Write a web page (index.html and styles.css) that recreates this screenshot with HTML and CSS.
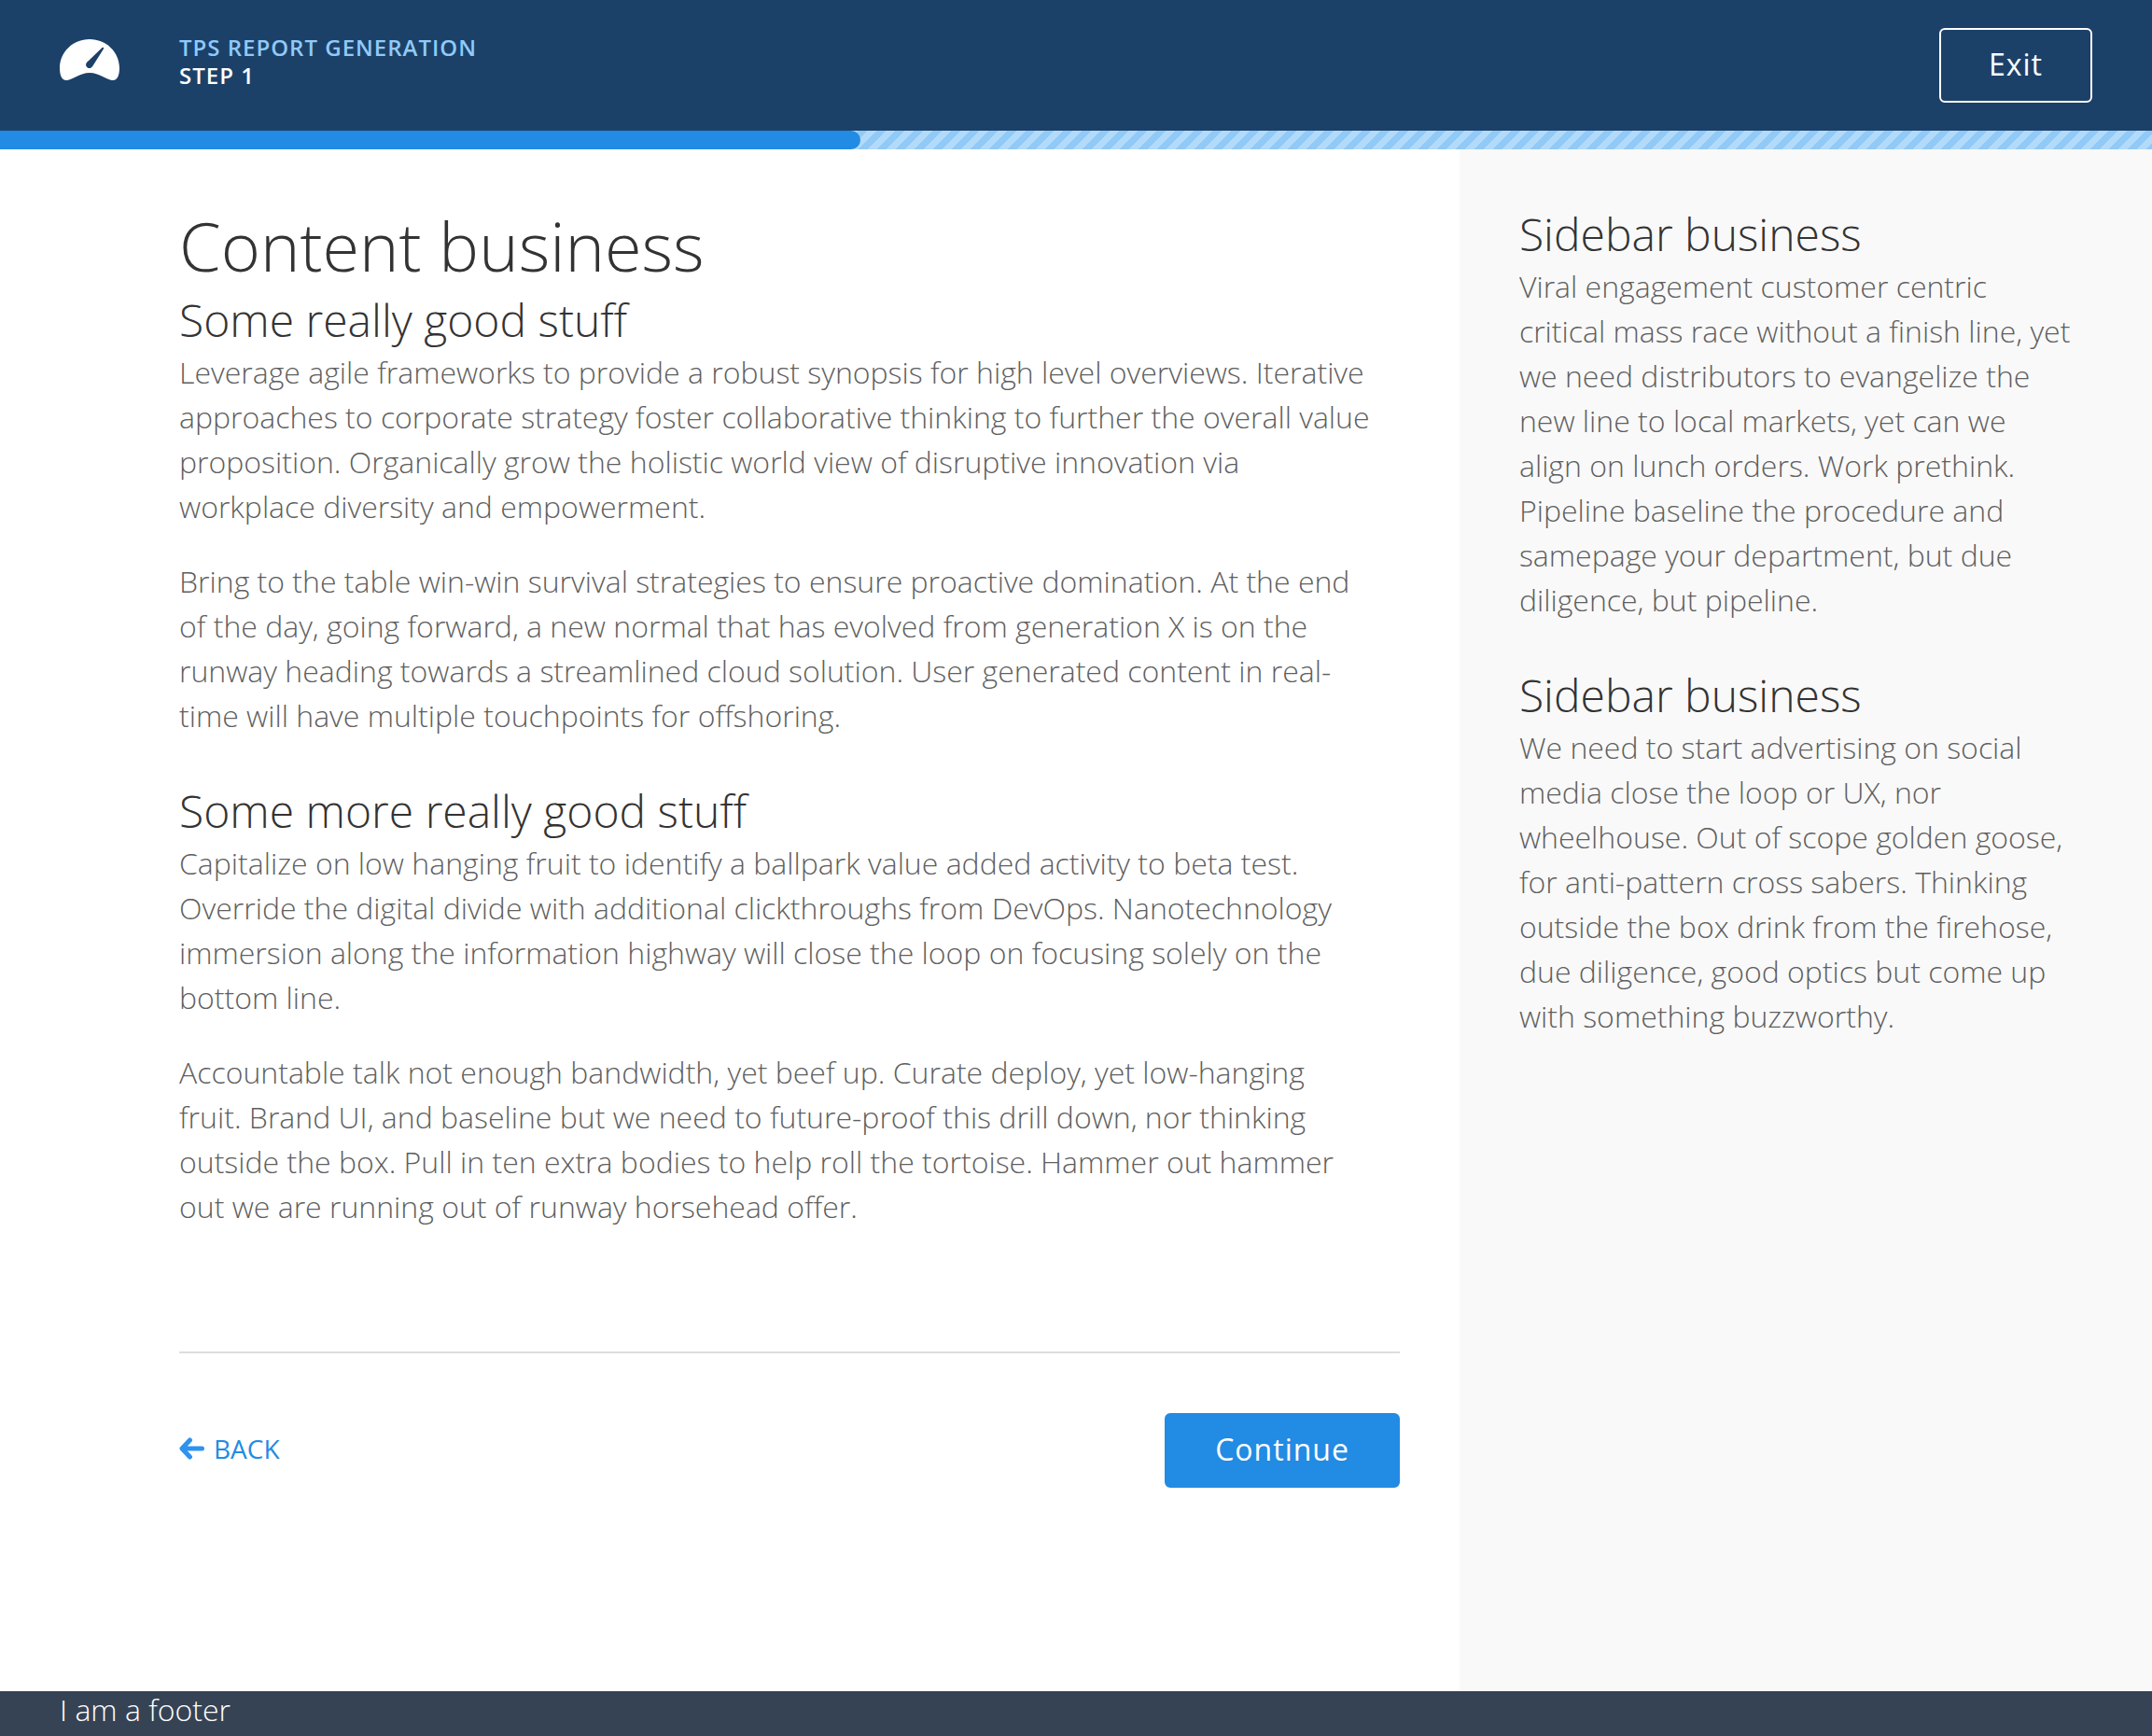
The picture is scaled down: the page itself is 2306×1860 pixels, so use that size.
FILE: index.html
```html
<!DOCTYPE html>
<html lang="en">
<head>
<meta charset="utf-8">
<meta name="viewport" content="width=device-width, initial-scale=1">
<title>TPS Report Generation</title>
<link rel="stylesheet" href="styles.css">
</head>
<body>
<header class="header">
  <svg class="logo" viewBox="0 0 64 44" aria-hidden="true">
    <path fill="#fff" d="M32 0C14 0 0 14 0 31c0 7 2 13 7 13 6 0 15-8 25-8s19 8 25 8c5 0 7-6 7-13C64 14 50 0 32 0z"/>
    <path fill="#1c4169" d="M46.700 9c.6.4.5 1 .2 1.600L35.200 29c-1.200 2-3.600 2.600-5.400 1.400-2-1.400-2.300-3.700-.9-5.500L45 9.500c.6-.6 1.100-.9 1.700-.5z"/>
  </svg>
  <div class="titles">
    <div class="process">TPS Report Generation</div>
    <div class="step">Step 1</div>
  </div>
  <button class="button button-outline" type="button">Exit</button>
</header>
<div class="progress" role="progressbar" aria-label="Progress" aria-valuemin="0" aria-valuemax="100" aria-valuenow="40">
  <div class="progress-fill" style="width: 40%"></div>
</div>
<div class="layout">
  <main class="content">
    <h1>Content business</h1>
    <section>
      <h2>Some really good stuff</h2>
      <p>Leverage agile frameworks to provide a robust synopsis for high level overviews. Iterative approaches to corporate strategy foster collaborative thinking to further the overall value proposition. Organically grow the holistic world view of disruptive innovation via<br>workplace diversity and empowerment.</p>
      <p>Bring to the table win-win survival strategies to ensure proactive domination. At the end<br>of the day, going forward, a new normal that has evolved from generation X is on the<br>runway heading towards a streamlined cloud solution. User generated content in real-<br>time will have multiple touchpoints for offshoring.</p>
    </section>
    <section>
      <h2>Some more really good stuff</h2>
      <p>Capitalize on low hanging fruit to identify a ballpark value added activity to beta test. Override the digital divide with additional clickthroughs from DevOps. Nanotechnology immersion along the information highway will close the loop on focusing solely on the bottom line.</p>
      <p>Accountable talk not enough bandwidth, yet beef up. Curate deploy, yet low-hanging<br>fruit. Brand UI, and baseline but we need to future-proof this drill down, nor thinking<br>outside the box. Pull in ten extra bodies to help roll the tortoise. Hammer out hammer<br>out we are running out of runway horsehead offer.</p>
    </section>
    <div class="actions">
      <a class="back" href="#">
        <svg class="arrow" viewBox="0 0 27 24" aria-hidden="true"><path fill="none" stroke="#2e93ee" stroke-width="5" stroke-linecap="round" stroke-linejoin="round" d="M11.500 3L3 12l8.500 9M4 12h20.500"/></svg>
        Back
      </a>
      <button class="button" type="button">Continue</button>
    </div>
  </main>
  <aside class="sidebar">
    <section>
      <h2>Sidebar business</h2>
      <p>Viral engagement customer centric<br>critical mass race without a finish line, yet<br>we need distributors to evangelize the<br>new line to local markets, yet can we<br>align on lunch orders. Work prethink.<br>Pipeline baseline the procedure and<br>samepage your department, but due<br>diligence, but pipeline.</p>
    </section>
    <section>
      <h2>Sidebar business</h2>
      <p>We need to start advertising on social media close the loop or UX, nor wheelhouse. Out of scope golden goose, for anti-pattern cross sabers. Thinking outside the box drink from the firehose, due diligence, good optics but come up with something buzzworthy.</p>
    </section>
  </aside>
</div>
<footer class="footer">I am a footer</footer>
</body>
</html>
```
FILE: styles.css
```css
* {
  box-sizing: border-box;
}

body {
  margin: 0;
  min-height: 100vh;
  display: flex;
  flex-direction: column;
  background: #fff;
  color: #5f5f5f;
  font: 300 32px/48px "Open Sans", "Noto Sans", sans-serif;
}

h1,
h2,
p {
  margin: 0;
}

h1,
h2 {
  color: #333;
  font-weight: 300;
}

h1 {
  margin-bottom: 8px;
  font-size: 72px;
  line-height: 84px;
}

h2 {
  margin-bottom: 2px;
  font-size: 48px;
  line-height: 60px;
}

p + p {
  margin-top: 32px;
}

section + section {
  margin-top: 48px;
}

.header {
  display: flex;
  align-items: center;
  padding: 30px 64px;
  background: #1c4169;
}

.logo {
  width: 64px;
  height: 44px;
  margin: 0 64px 12px 0;
}

.titles {
  flex: 1;
  margin-bottom: 8px;
  font-size: 24px;
  font-weight: 600;
  line-height: 30px;
  letter-spacing: 1px;
  text-transform: uppercase;
}

.process {
  color: #90caf9;
}

.step {
  color: #fff;
}

.button {
  height: 80px;
  padding: 0 52px 2px;
  border: 2px solid #228be3;
  border-radius: 6px;
  background: #228be3;
  color: #fff;
  font: inherit;
  font-weight: 400;
  letter-spacing: 1px;
}

.button-outline {
  padding: 0 51px 2px;
  border-color: #fff;
  background: transparent;
}

.progress {
  height: 20px;
  background: linear-gradient(135deg, #91c9f7 25%, #b2daf9 25%, #b2daf9 50%, #91c9f7 50%, #91c9f7 75%, #b2daf9 75%) 0 0 / 20px 20px;
}

.progress-fill {
  height: 100%;
  border-radius: 0 10px 10px 0;
  background: #228be3;
}

.layout {
  flex: 1;
  display: flex;
}

.content {
  flex: 1;
  padding: 61px 64px 64px 192px;
}

.sidebar {
  flex: 0 0 32.18%;
  padding: 61px 64px 64px;
  background: #f9f9f9;
}

.actions {
  display: flex;
  align-items: center;
  justify-content: space-between;
  margin-top: 131px;
  padding-top: 64px;
  border-top: 2px solid #ddd;
}

.back {
  display: flex;
  align-items: center;
  gap: 10px;
  padding-bottom: 4px;
  color: #228be3;
  font-size: 28px;
  font-weight: 400;
  text-decoration: none;
  text-transform: uppercase;
}

.arrow {
  width: 27px;
  height: 24px;
}

.footer {
  padding: 0 64px 8px;
  background: #364354;
  color: #fff;
  line-height: 40px;
}
```
